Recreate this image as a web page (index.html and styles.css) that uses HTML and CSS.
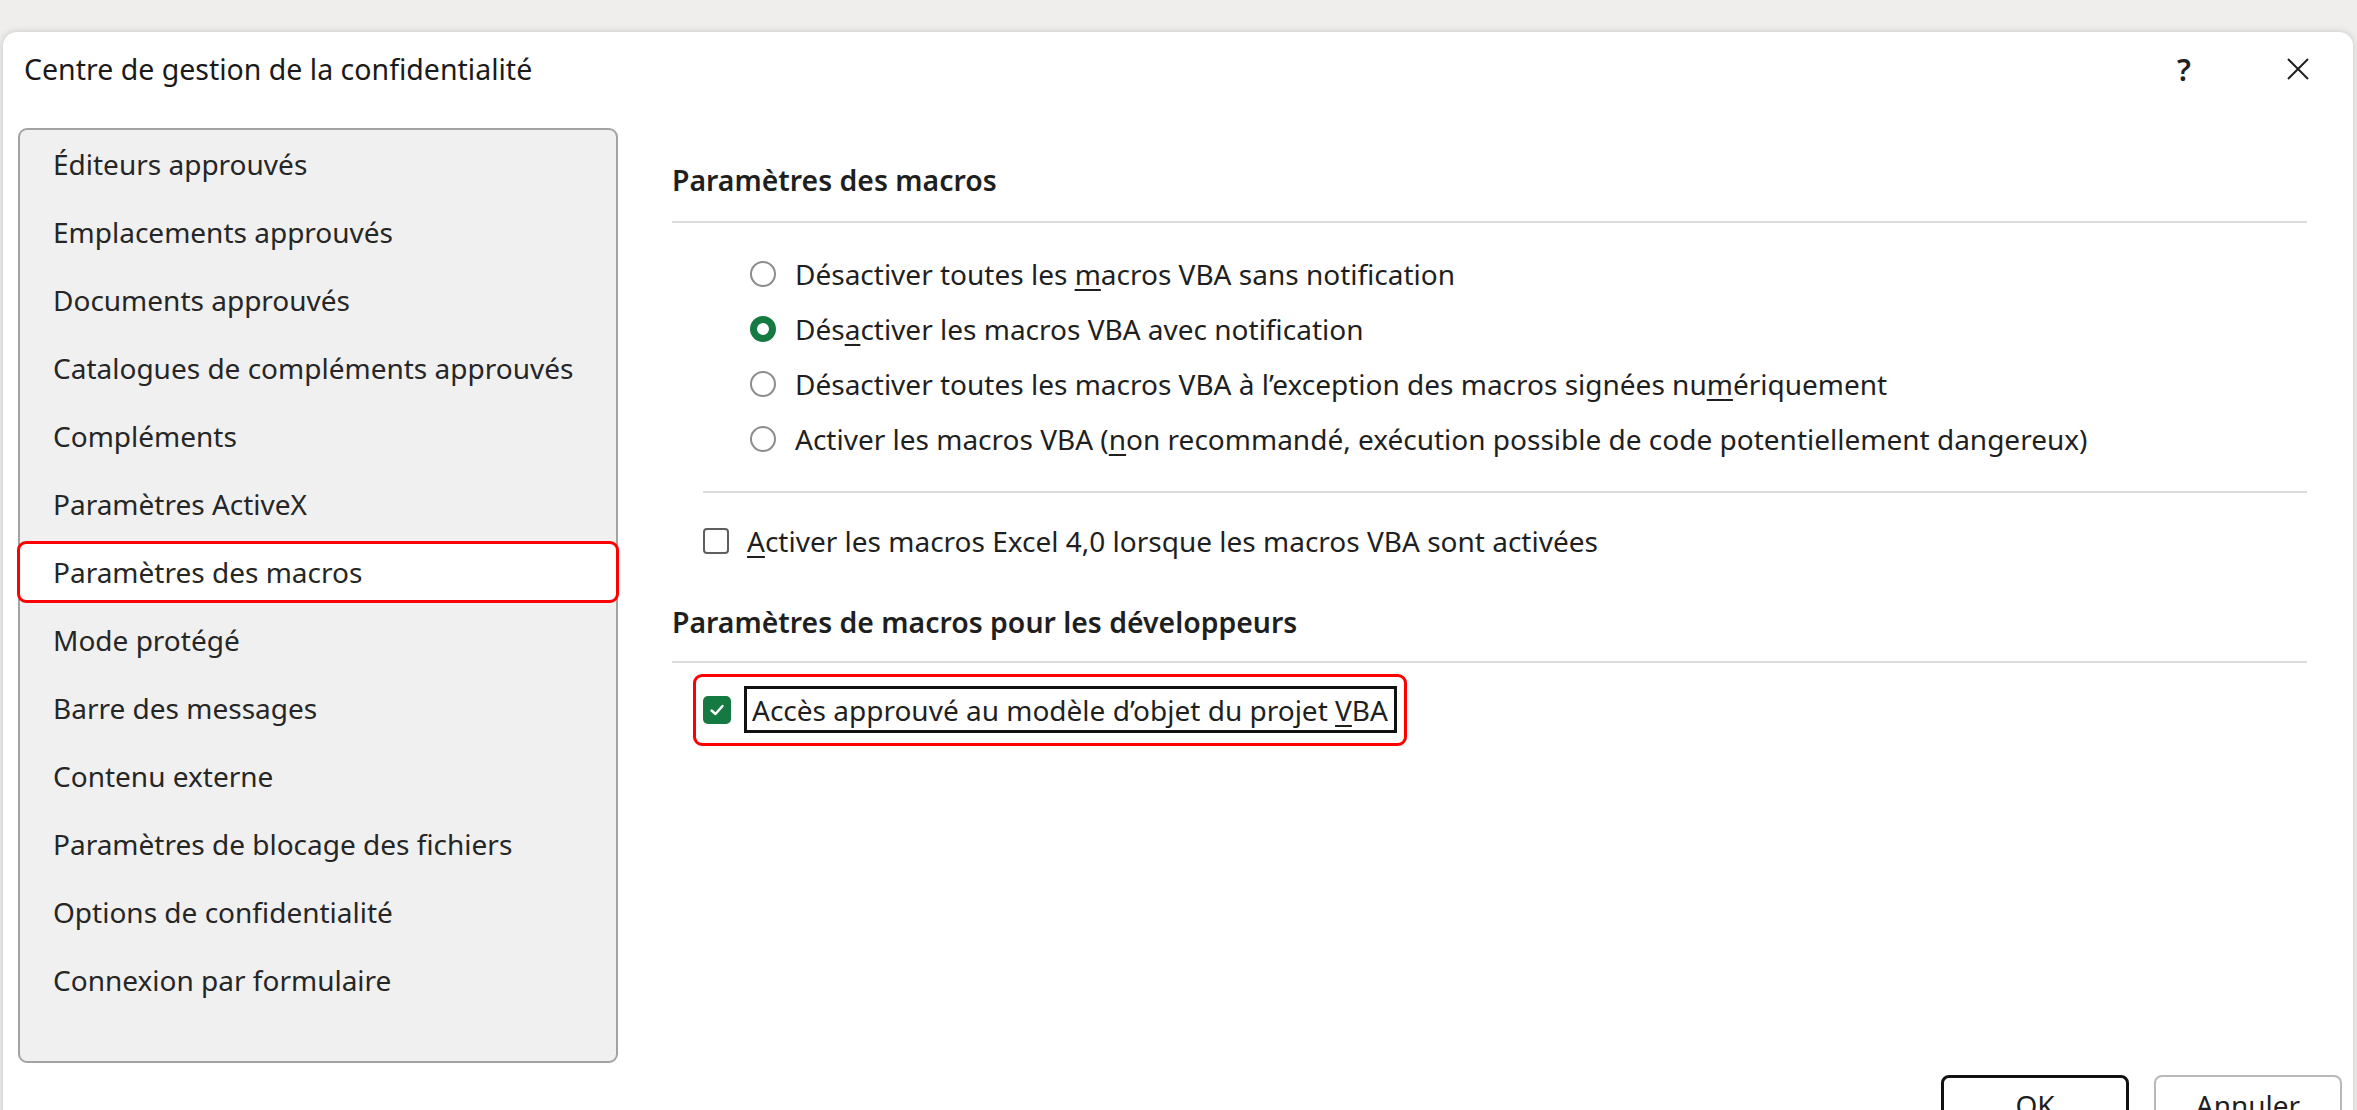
FILE: index.html
```html
<!DOCTYPE html>
<html lang="fr">
<head>
<meta charset="utf-8">
<title>Centre de gestion de la confidentialité</title>
<link rel="stylesheet" href="styles.css">
</head>
<body>
<div class="dialog">
  <header class="titlebar">
    <span class="title">Centre de gestion de la confidentialité</span>
    <div class="caption-buttons">
      <span class="cap-btn help">?</span>
      <span class="cap-btn close">
        <svg width="24" height="24" viewBox="0 0 24 24" aria-hidden="true">
          <path d="M2 2 L22 22 M22 2 L2 22" stroke="#1f1f1f" stroke-width="2" fill="none"/>
        </svg>
      </span>
    </div>
  </header>

  <div class="content">
    <nav class="categories">
      <div class="cat">Éditeurs approuvés</div>
      <div class="cat">Emplacements approuvés</div>
      <div class="cat">Documents approuvés</div>
      <div class="cat">Catalogues de compléments approuvés</div>
      <div class="cat">Compléments</div>
      <div class="cat">Paramètres ActiveX</div>
      <div class="cat selected">Paramètres des macros</div>
      <div class="cat">Mode protégé</div>
      <div class="cat">Barre des messages</div>
      <div class="cat">Contenu externe</div>
      <div class="cat">Paramètres de blocage des fichiers</div>
      <div class="cat">Options de confidentialité</div>
      <div class="cat">Connexion par formulaire</div>
    </nav>

    <main class="pane">
      <h2 class="section-title">Paramètres des macros</h2>
      <div class="sep"></div>

      <div class="radio-group">
        <div class="option"><span class="radio"></span><span>Désactiver toutes les <u>m</u>acros VBA sans notification</span></div>
        <div class="option"><span class="radio checked"></span><span>Dés<u>a</u>ctiver les macros VBA avec notification</span></div>
        <div class="option"><span class="radio"></span><span>Désactiver toutes les macros VBA à l’exception des macros signées nu<u>m</u>ériquement</span></div>
        <div class="option"><span class="radio"></span><span>Activer les macros VBA (<u>n</u>on recommandé, exécution possible de code potentiellement dangereux)</span></div>
      </div>

      <div class="sep indent"></div>

      <div class="option check-option"><span class="checkbox"></span><span><u>A</u>ctiver les macros Excel 4,0 lorsque les macros VBA sont activées</span></div>

      <h2 class="section-title second">Paramètres de macros pour les développeurs</h2>
      <div class="sep tight"></div>

      <div class="highlight">
        <span class="checkbox checked">
          <svg width="18" height="18" viewBox="0 0 18 18" aria-hidden="true">
            <polyline points="3.5,9.5 7.5,13 14.5,5" fill="none" stroke="#fff" stroke-width="2.4" stroke-linecap="round" stroke-linejoin="round"/>
          </svg>
        </span>
        <span class="focus-label"><span>Accès approuvé au modèle d’objet du projet <u>V</u>BA</span></span>
      </div>
    </main>
  </div>

  <footer class="buttons">
    <button class="btn default">OK</button>
    <button class="btn">Annuler</button>
  </footer>
</div>
</body>
</html>
```

FILE: styles.css
```css
* {
  box-sizing: border-box;
}

html,
body {
  margin: 0;
  height: 100%;
}

body {
  background: #efeeec;
  overflow: hidden;
  padding: 32px 4px 0 3px;
  font-family: "Noto Sans", "Open Sans", sans-serif;
  font-size: 28px;
  color: #1f1f1f;
}

/* Dialog window */
.dialog {
  height: 1140px;
  background: #ffffff;
  border-radius: 14px 14px 0 0;
  box-shadow: 0 0 7px rgba(0, 0, 0, 0.18);
  display: flex;
  flex-direction: column;
}

.titlebar {
  height: 74px;
  flex: none;
  display: flex;
  align-items: center;
  justify-content: space-between;
  padding: 0 25px 0 21px;
}

.title {
  font-size: 28.5px;
  color: #1a1a1a;
}

.caption-buttons {
  display: flex;
  gap: 54px;
}

.cap-btn {
  width: 60px;
  height: 60px;
  display: flex;
  align-items: center;
  justify-content: center;
}

.help {
  font-size: 30px;
  font-weight: 600;
  color: #1f1f1f;
}

/* Body: category list + settings pane */
.content {
  display: flex;
  gap: 54px;
  padding: 22px 46px 0 15px;
}

.categories {
  width: 600px;
  height: 935px;
  flex: none;
  background: #f0f0f0;
  border: 2px solid #a3a3a3;
  border-radius: 9px;
}

.cat {
  height: 68px;
  display: flex;
  align-items: center;
  padding-left: 33px;
  color: #262626;
}

.cat.selected {
  height: 62px;
  margin: 3px -3px;
  border: 3px solid #ff0000;
  border-radius: 9px;
  background: #ffffff;
}

.pane {
  flex: 1;
  padding-top: 32px;
}

.section-title {
  margin: 0;
  height: 40px;
  line-height: 40px;
  font-size: 28.4px;
  font-weight: 600;
  color: #1f1f1f;
}

.section-title.second {
  margin-top: 34px;
}

.sep {
  height: 2px;
  background: #dcdcdc;
  margin-top: 21px;
}

.sep.indent {
  margin: 25px 0 0 31px;
}

.sep.tight {
  margin-top: 19px;
}

.radio-group {
  margin-top: 23px;
  padding-left: 78px;
}

.option {
  height: 55px;
  display: flex;
  align-items: center;
}

.option u,
.focus-label u {
  text-underline-offset: 4px;
  text-decoration-thickness: 2px;
}

.radio {
  width: 26px;
  height: 26px;
  flex: none;
  margin-right: 19px;
  border: 2px solid #8c8c8c;
  border-radius: 50%;
  background: #ffffff;
}

.radio.checked {
  border: 7px solid #157a42;
}

.check-option {
  margin-top: 20px;
  padding-left: 31px;
}

.checkbox {
  width: 26px;
  height: 26px;
  flex: none;
  margin-right: 18px;
  border: 2px solid #5f5f5f;
  border-radius: 4px;
  background: #ffffff;
}

/* Highlighted developer option */
.highlight {
  display: inline-flex;
  align-items: center;
  margin: 11px 0 0 21px;
  padding: 9px 7px 10px 7px;
  border: 3px solid #ff0000;
  border-radius: 9px;
}

.checkbox.checked {
  width: 28px;
  height: 28px;
  margin-right: 13px;
  border: none;
  border-radius: 5px;
  background: #157a42;
  display: flex;
  align-items: center;
  justify-content: center;
}

.focus-label {
  height: 47px;
  display: flex;
  align-items: center;
  padding: 0 6px 0 5px;
  border: 3px solid #111111;
}

/* Dialog buttons */
.buttons {
  display: flex;
  justify-content: flex-end;
  gap: 25px;
  margin-top: 12px;
  padding-right: 11px;
}

.btn {
  width: 188px;
  height: 60px;
  padding: 0;
  font-family: inherit;
  font-size: 28px;
  color: #1f1f1f;
  background: #ffffff;
  border: 2px solid #b9b9b9;
  border-radius: 8px;
}

.btn.default {
  border: 3px solid #111111;
}
```
